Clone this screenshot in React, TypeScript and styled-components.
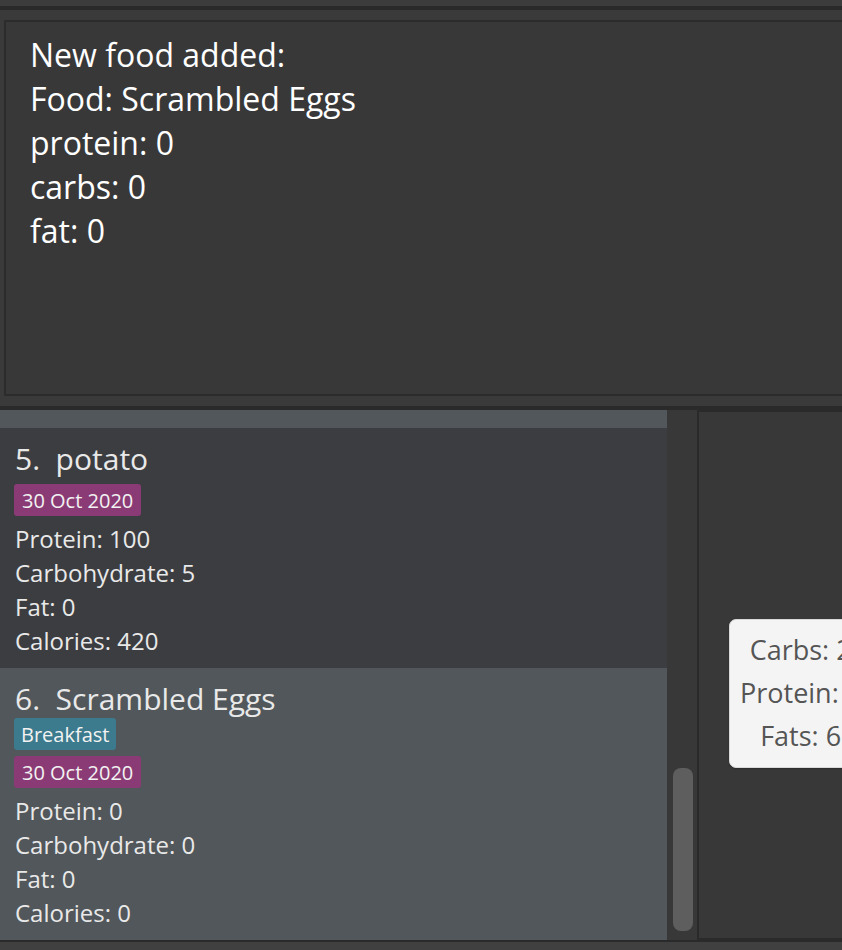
import React, { useLayoutEffect, useRef } from "react";
import styled, { createGlobalStyle } from "styled-components";

const GlobalStyle = createGlobalStyle`
  *, *::before, *::after { box-sizing: border-box; }
  html, body { margin: 0; padding: 0; background: #404040; }
  body { font-family: "Open Sans", "Noto Sans", sans-serif; }
  #root { width: 842px; height: 950px; overflow: hidden; }
`;

const Page = styled.div`
  width: 842px;
  height: 950px;
  display: flex;
  flex-direction: column;
  background: #404040;
  overflow: hidden;
`;

const TopStrip = styled.div`
  height: 6px;
  flex: none;
  background: #3c3c3c;
`;

const Rule = styled.div<{ $h: number }>`
  height: ${(p) => p.$h}px;
  background: #2a2a2a;
  flex: none;
`;

const ResultArea = styled.div`
  flex: none;
  background: #3a3a3a;
  padding: 10px 0 10px 4px;
`;

const ResultBox = styled.div`
  height: 376px;
  background: #383838;
  border: 2px solid #2b2b2b;
  border-right: none;
  padding: 11px 24px;
  color: #ffffff;
  font-size: 32px;
  line-height: 44px;
  white-space: pre-line;
`;

const Main = styled.div`
  height: 530px;
  display: flex;
  flex: none;
`;

const ListViewport = styled.div`
  width: 667px;
  height: 530px;
  overflow: hidden;
  background: #3c3d40;
`;

const Item = styled.div<{ $alt: boolean }>`
  background: ${(p) => (p.$alt ? "#51575a" : "#3c3d40")};
  padding: 12px 15px 10px;
  display: flex;
  flex-direction: column;
  align-items: flex-start;
  color: #e9e9e9;
`;

const Title = styled.div`
  font-size: 30px;
  line-height: 38px;
  white-space: pre;
`;

const Badges = styled.div`
  display: flex;
  flex-direction: column;
  align-items: flex-start;
  gap: 6px;
  margin-left: -1px;
`;

const TagRow = styled.div`
  display: flex;
  gap: 6px;
`;

const Badge = styled.span<{ $kind: "date" | "tag" }>`
  display: inline-flex;
  align-items: center;
  height: 32px;
  padding: 0 ${(p) => (p.$kind === "date" ? 8 : 7)}px;
  border-radius: 3px;
  font-size: 20px;
  color: #f2f2f2;
  background: ${(p) => (p.$kind === "date" ? "#8a3b75" : "#3c7a8d")};
`;

const Details = styled.div`
  margin-top: 6px;
  font-size: 24px;
  line-height: 34px;
`;

const ScrollTrack = styled.div`
  width: 30px;
  flex: none;
  background: #383838;
  display: flex;
  flex-direction: column;
  justify-content: flex-end;
  padding: 0 4px 9px 6px;
`;

const Thumb = styled.div`
  height: 163px;
  background: #5e5e5e;
  border-radius: 8px;
`;

const Divider = styled.div`
  width: 2px;
  flex: none;
  background: #2a2a2a;
`;

const ChartPanel = styled.div`
  flex: 1;
  background: #383838;
  border-top: 2px solid #2a2a2a;
  border-bottom: 2px solid #2a2a2a;
  overflow: hidden;
  padding: 207px 0 0 30px;
`;

const Legend = styled.div`
  width: 181px;
  background: #f4f4f4;
  border: 1px solid #d9d9d9;
  border-radius: 7px;
  box-shadow: 0 1px 2px rgba(0, 0, 0, 0.25);
  padding: 8px 0 10px;
  text-align: center;
  color: #555555;
  font-size: 27px;
  line-height: 43px;
  white-space: nowrap;
`;

type Food = {
  n: number;
  name: string;
  tags: string[];
  date: string;
  protein: number;
  carbs: number;
  fat: number;
  calories: number;
};

const foods: Food[] = [
  { n: 4, name: "rice", tags: [], date: "30 Oct 2020", protein: 10, carbs: 60, fat: 2, calories: 300 },
  { n: 5, name: "potato", tags: [], date: "30 Oct 2020", protein: 100, carbs: 5, fat: 0, calories: 420 },
  { n: 6, name: "Scrambled Eggs", tags: ["Breakfast"], date: "30 Oct 2020", protein: 0, carbs: 0, fat: 0, calories: 0 },
];

export default function App() {
  const listRef = useRef<HTMLDivElement>(null);
  useLayoutEffect(() => {
    if (listRef.current) listRef.current.scrollTop = 222;
  }, []);

  return (
    <Page>
      <GlobalStyle />
      <TopStrip />
      <Rule $h={4} />
      <ResultArea>
        <ResultBox>
          {"New food added:\nFood: Scrambled Eggs\nprotein: 0\ncarbs: 0\nfat: 0"}
        </ResultBox>
      </ResultArea>
      <Rule $h={4} />
      <Main>
        <ListViewport ref={listRef}>
          {foods.map((f, i) => (
            <Item key={f.n} $alt={i % 2 === 0}>
              <Title>{`${f.n}.  ${f.name}`}</Title>
              <Badges>
                <TagRow>
                  {f.tags.map((t) => (
                    <Badge key={t} $kind="tag">{t}</Badge>
                  ))}
                </TagRow>
                <Badge $kind="date">{f.date}</Badge>
              </Badges>
              <Details>
                <div>Protein: {f.protein}</div>
                <div>Carbohydrate: {f.carbs}</div>
                <div>Fat: {f.fat}</div>
                <div>Calories: {f.calories}</div>
              </Details>
            </Item>
          ))}
        </ListViewport>
        <ScrollTrack>
          <Thumb />
        </ScrollTrack>
        <Divider />
        <ChartPanel>
          <Legend>
            <div>Carbs: 24%</div>
            <div>Protein: 15%</div>
            <div>Fats: 61%</div>
          </Legend>
        </ChartPanel>
      </Main>
      <Rule $h={2} />
    </Page>
  );
}
